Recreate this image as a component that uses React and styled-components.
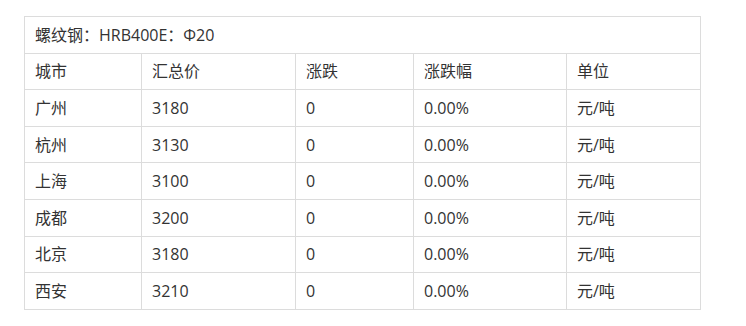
import React from "react";
import styled, { createGlobalStyle } from "styled-components";

const GlobalStyle = createGlobalStyle`
  body {
    margin: 0;
    background: #fff;
    font-family: "Open Sans", "Noto Sans CJK SC", sans-serif;
  }
`;

const Page = styled.div`
  padding: 16px 24px;
`;

const Table = styled.table`
  width: 677px;
  border-collapse: collapse;
  table-layout: fixed;
  color: #333;
  font-size: 16px;
`;

const Cell = styled.td`
  border: 1px solid #dcdcdc;
  height: 36.6px;
  padding: 0 0 0 10px;
  box-sizing: border-box;
  vertical-align: middle;
  white-space: nowrap;
  line-height: 20px;
`;

const columns = [117, 154, 118, 153, 134];

const rows = [
  ["广州", "3180", "0", "0.00%", "元/吨"],
  ["杭州", "3130", "0", "0.00%", "元/吨"],
  ["上海", "3100", "0", "0.00%", "元/吨"],
  ["成都", "3200", "0", "0.00%", "元/吨"],
  ["北京", "3180", "0", "0.00%", "元/吨"],
  ["西安", "3210", "0", "0.00%", "元/吨"],
];

const App = () => {
  return (
    <Page>
      <GlobalStyle />
      <Table>
        <colgroup>
          {columns.map((w, i) => (
            <col key={i} style={{ width: w }} />
          ))}
        </colgroup>
        <tbody>
          <tr>
            <Cell colSpan={5}>螺纹钢：HRB400E：Φ20</Cell>
          </tr>
          <tr>
            <Cell>城市</Cell>
            <Cell>汇总价</Cell>
            <Cell>涨跌</Cell>
            <Cell>涨跌幅</Cell>
            <Cell>单位</Cell>
          </tr>
          {rows.map((row) => (
            <tr key={row[0]}>
              {row.map((v, i) => (
                <Cell key={i}>{v}</Cell>
              ))}
            </tr>
          ))}
        </tbody>
      </Table>
    </Page>
  );
};

export default App;
